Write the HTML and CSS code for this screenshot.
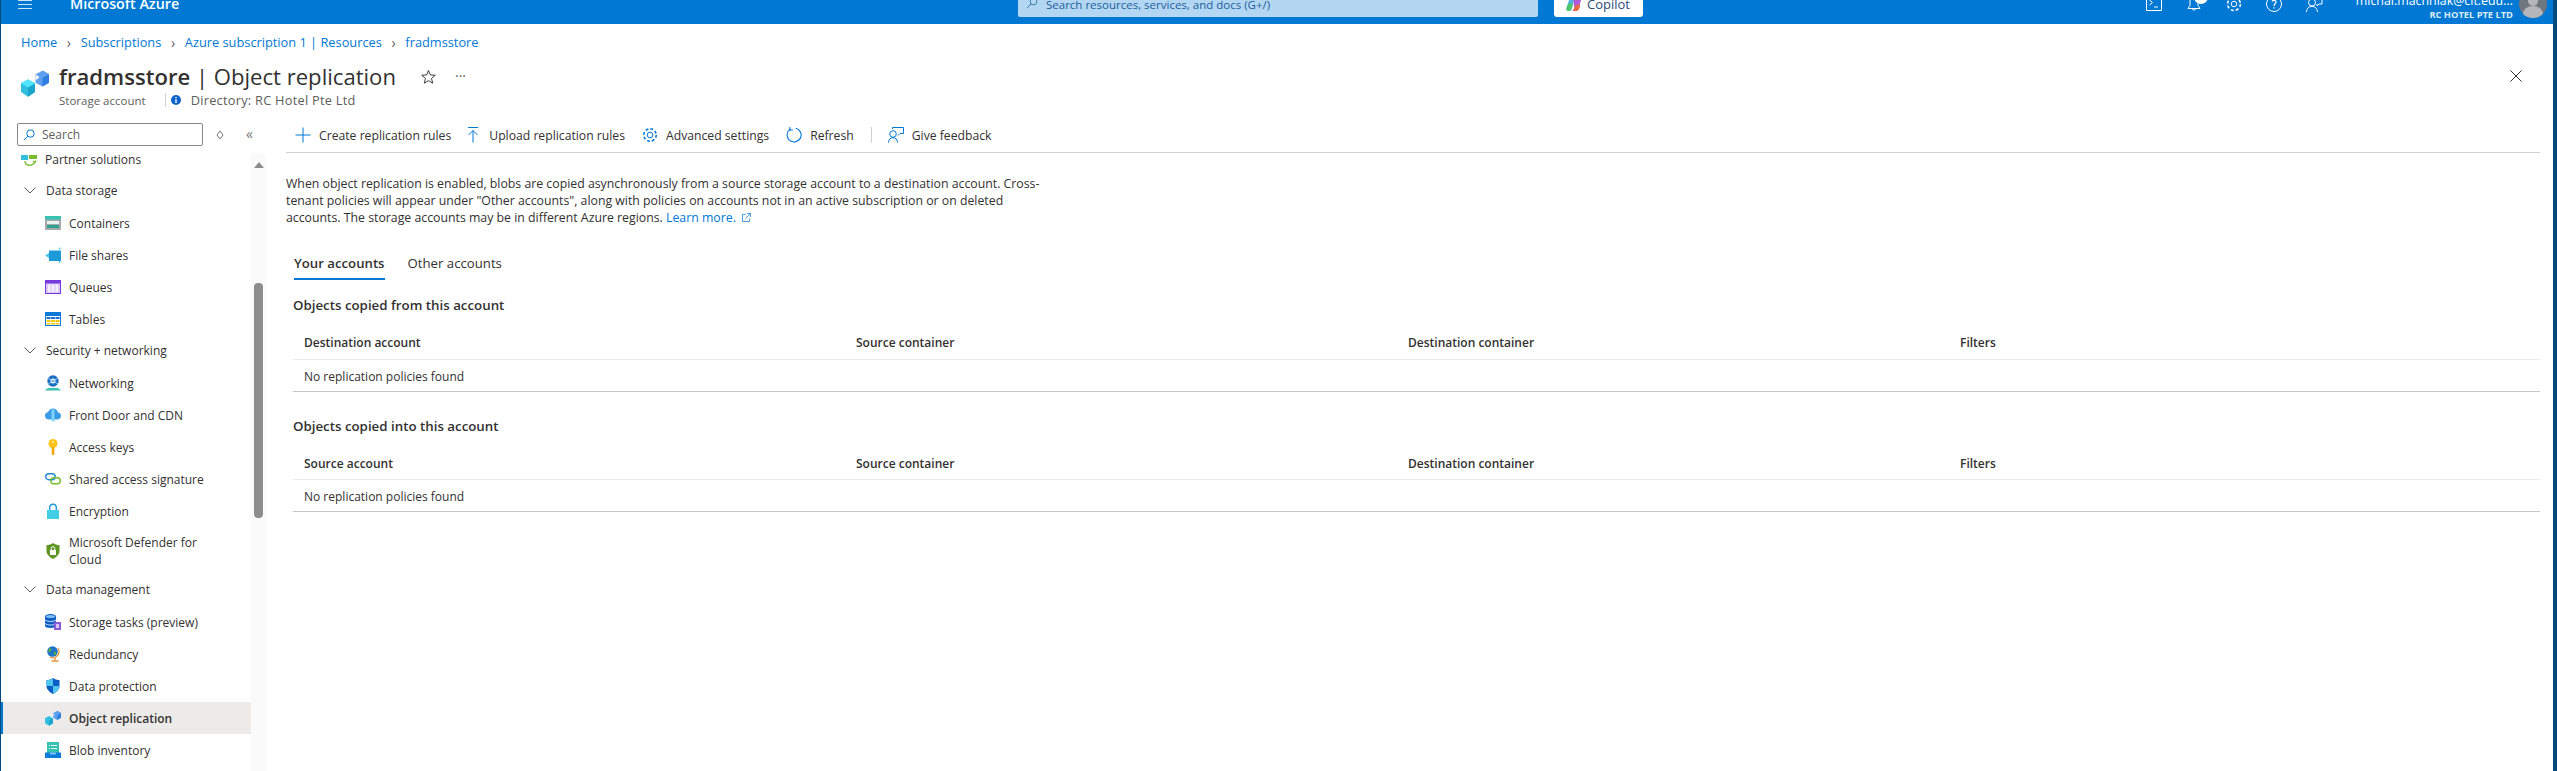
FILE: index.html
```html
<!DOCTYPE html>
<html lang="en">
<head>
    <meta charset="UTF-8">
    <meta name="viewport" content="width=device-width, initial-scale=1.0">
    <title>fradmsstore | Object replication</title>
    <link rel="stylesheet" href="styles.css">
</head>

<body>
    <div class="frame">
        <header class="topbar">
            <div class="hamburger"><span></span><span></span><span></span></div>
            <div class="brand">Microsoft Azure</div>
            <div class="global-search">
                <svg class="search-glass" viewBox="0 0 16 16"><circle cx="10" cy="6" r="4.5" fill="none" stroke="#1d5f9c" stroke-width="1"/><path d="M6.700 9.300 1.500 14.500" stroke="#1d5f9c" stroke-width="1.100"/></svg>
                <span>Search resources, services, and docs (G+/)</span>
            </div>
            <div class="copilot">
                <svg class="copilot-logo" viewBox="0 0 16 16">
                    <path d="M4 1h5L6 12c-.4 1.500-1.200 3-3 3-2 0-3-1-2.500-3z" fill="#4fb0e8"/>
                    <path d="M2 8c2-1 4-1 5 0l-1 4c-.4 1.500-1.200 3-3 3-2 0-3-1-2.500-3z" fill="#52c66a"/>
                    <path d="M7 1h5c2 0 3.500 1 3 3l-2 8c-.4 1.500-1.500 3-3.500 3H6c1.500-1 2-2 2.300-3z" fill="#b05ad6"/>
                    <path d="M7 15h3c2 0 3-1.500 3.500-3l.7-3c-2-.5-4 0-5 1.500z" fill="#f0683c"/>
                </svg>
                <span>Copilot</span>
            </div>
            <div class="top-icons">
                <svg class="top-icon" viewBox="0 0 16 16"><path d="M.5-5h15v15.500H.5z" fill="none" stroke="#fff"/><path d="M3.500 0l3 2.500-3 2.500M8 7h4" fill="none" stroke="#fff"/></svg>
                <div class="bell">
                    <svg class="top-icon" viewBox="0 0 16 16"><path d="M4-4v9.500L2 8.500h12l-2-3V-4M6 8.500c0 1 .8 1.500 2 1.500s2-.5 2-1.500" fill="none" stroke="#fff"/></svg>
                    <span class="bell-badge"></span>
                </div>
                <svg class="top-icon" viewBox="0 0 16 16"><circle cx="8" cy="4" r="2.800" fill="none" stroke="#fff"/><circle cx="8" cy="4" r="6.400" fill="none" stroke="#fff" stroke-width="1.500" stroke-dasharray="3 2"/></svg>
                <svg class="top-icon" viewBox="0 0 16 16"><circle cx="8" cy="4" r="7.500" fill="none" stroke="#fff"/><path d="M6 1.500C6.500 0 9.500 0 10 1.800 10.300 3.500 8 3.500 8 6M8 7.300v1.200" fill="none" stroke="#fff" stroke-width="1.200"/></svg>
                <svg class="top-icon" viewBox="0 0 16 16"><circle cx="6" cy="2.500" r="3.500" fill="none" stroke="#fff"/><path d="M.5 12c.3-4 2.500-5.500 5.500-5.500S11 8 11.500 12" fill="none" stroke="#fff"/><path d="M10-1h6v5h-3l-2 2V4" fill="none" stroke="#fff"/></svg>
            </div>
            <div class="account">
                <div class="account-mail">michal.machniak@cit.edu...</div>
                <div class="account-org">RC HOTEL PTE LTD</div>
            </div>
            <div class="avatar"><span class="avatar-head"></span><span class="avatar-body"></span></div>
        </header>

        <nav class="breadcrumb">
            <a>Home</a><span class="crumb-sep">&#8250;</span>
            <a>Subscriptions</a><span class="crumb-sep">&#8250;</span>
            <a>Azure subscription 1 | Resources</a><span class="crumb-sep">&#8250;</span>
            <a>fradmsstore</a>
        </nav>

        <div class="blade-head">
            <svg class="blade-icon" viewBox="0 0 16 16">
                <path d="M8.300 3 12.500 .8 16 2.800v5l-3.800 2.200-3.900-2.200z" fill="#5ea0ef"/>
                <path d="M12.300 5.200 16 2.800v5l-3.700 2.200z" fill="#2f7fe0"/>
                <path d="M0 8.200 4 6l4 2.200v5L4 15.800 0 13.200z" fill="#32bedd"/>
                <path d="M4 10.500 8 8.200v5l-4 2.600z" fill="#1ba5cc"/>
                <path d="M0 8.200 4 6l4 2.200-4 2.300z" fill="#50e6ff"/>
                <path d="M6 6.500c.8-1.200 2-1.800 3.500-1.800M8.500 3.500l1.500 1.200-1.500 1.300" fill="none" stroke="#fff" stroke-width=".7"/>
            </svg>
            <div class="blade-titles">
                <div class="title-row">
                    <h1><strong>fradmsstore</strong> | Object replication</h1>
                    <svg class="star" viewBox="0 0 16 16"><path d="M8 1.500 10 6.300l5.200.4-4 3.400 1.300 5L8 12.400l-4.500 2.700 1.300-5-4-3.400L6 6.300z" fill="none" stroke="#323130"/></svg>
                    <span class="more">&middot;&middot;&middot;</span>
                </div>
                <div class="sub-row">
                    <span>Storage account</span>
                    <span class="sub-sep"></span>
                    <svg class="info" viewBox="0 0 10 10"><circle cx="5" cy="5" r="5" fill="#0f62c9"/><path d="M4.300 4.200h1.400v3.800H4.300zM4.300 2h1.400v1.300H4.300z" fill="#fff"/></svg>
                    <span class="directory">Directory: RC Hotel Pte Ltd</span>
                </div>
            </div>
            <svg class="close" viewBox="0 0 12 12"><path d="M.5.500l11 11M11.500.500l-11 11" stroke="#323130"/></svg>
        </div>

        <div class="blade-body">
            <aside class="sidebar">
                <div class="menu-search-row">
                    <div class="menu-search">
                        <svg class="menu-glass" viewBox="0 0 12 12"><circle cx="7.500" cy="4.500" r="3.700" fill="none" stroke="#0078d4"/><path d="M4.800 7.200.8 11.200" stroke="#0078d4"/></svg>
                        <span>Search</span>
                    </div>
                    <svg class="diamond" viewBox="0 0 8 10"><path d="M4 1l3 4-3 4-3-4z" fill="none" stroke="#777"/></svg>
                    <span class="collapse">&laquo;</span>
                </div>
                <div class="menu-wrap">
                    <ul class="menu">
                        <li class="menu-item partner">
                            <svg class="ico" viewBox="0 0 16 16"><path d="M0 4h7v5H0z" fill="#32bedd"/><path d="M8 4h8v4H8z" fill="#76bc2d"/><path d="M4 10c0 5 7 6 10 1M12 10l2 1.500 1-2" fill="none" stroke="#76bc2d" stroke-width="1.300"/></svg>
                            <span>Partner solutions</span>
                        </li>
                        <li class="menu-group"><svg class="chev" viewBox="0 0 12 7"><path d="M.5.500 6 6l5.500-5.500" fill="none" stroke="#605e5c"/></svg><span>Data storage</span></li>
                        <li class="menu-item">
                            <svg class="ico" viewBox="0 0 16 16"><path d="M0 1h16v14H0z" fill="#a6a8aa"/><path d="M0 1h16v3.500H0z" fill="#37c2b1"/><path d="M2 6h12v3H2z" fill="#e8f4f2"/><path d="M2 10h12v3H2z" fill="#2d9f8e"/></svg>
                            <span>Containers</span>
                        </li>
                        <li class="menu-item">
                            <svg class="ico" viewBox="0 0 16 16"><path d="M4 3.500h12v10.500H4z" fill="#1e9bd7"/><path d="M0 8.500 4 6v5z" fill="#50c7ef"/><circle cx="14.500" cy="1.500" r="1" fill="#50c7ef"/><circle cx="14.500" cy="15" r="1" fill="#50c7ef"/></svg>
                            <span>File shares</span>
                        </li>
                        <li class="menu-item">
                            <svg class="ico" viewBox="0 0 16 16"><path d="M0 1h16v14H0z" fill="#773adc"/><path d="M1 4.500h14V14H1z" fill="#d9c8f7"/><path d="M3 5.500h2.500V13H3zM6.800 5.500h2.500V13H6.800zM10.500 5.500H13V13h-2.500z" fill="#f4effd"/></svg>
                            <span>Queues</span>
                        </li>
                        <li class="menu-item">
                            <svg class="ico" viewBox="0 0 16 16"><path d="M0 1h16v14H0z" fill="#0a7bd8"/><path d="M1 5h14v9H1z" fill="#fff"/><path d="M1.500 6h4v2h-4zM6 6h4v2H6zM10.500 6h4v2h-4z" fill="#1e6fd0"/><path d="M1.500 9h4v2h-4zM6 9h4v2H6zM10.500 9h4v2h-4zM1.500 12h4v1.500h-4zM6 12h4v1.500H6zM10.500 12h4v1.500h-4z" fill="#f2c811"/></svg>
                            <span>Tables</span>
                        </li>
                        <li class="menu-group"><svg class="chev" viewBox="0 0 12 7"><path d="M.5.500 6 6l5.500-5.500" fill="none" stroke="#605e5c"/></svg><span>Security + networking</span></li>
                        <li class="menu-item">
                            <svg class="ico" viewBox="0 0 16 16"><circle cx="8" cy="6" r="5.700" fill="#1b6ec2"/><circle cx="8" cy="6" r="2.500" fill="#fff"/><circle cx="8" cy="6" r="1.300" fill="#1b6ec2"/><path d="M3 3l10 6M3 9l10-6" stroke="#8cc4ee"/><path d="M0 15.500c1-1.500 2-2 3.500-2.500h9c1.500.5 2.500 1 3.500 2.500z" fill="#37c2b1"/></svg>
                            <span>Networking</span>
                        </li>
                        <li class="menu-item">
                            <svg class="ico" viewBox="0 0 16 16"><path d="M4 12.500C1.500 12.500 0 10.800 0 8.700 0 6.800 1.300 5.300 3.200 5 3.800 2.800 5.700 1.500 8 1.500c2.500 0 4.400 1.500 4.900 3.700 1.800.3 3.100 1.700 3.100 3.500 0 2.100-1.500 3.800-4 3.800z" fill="#3b9ce8"/><path d="M6.500 2.500h3v12.500l-3-1.500z" fill="#7fd4f5"/></svg>
                            <span>Front Door and CDN</span>
                        </li>
                        <li class="menu-item">
                            <svg class="ico" viewBox="0 0 16 16"><circle cx="8" cy="4.500" r="4.500" fill="#fcc419"/><path d="M6.700 8h2.600v8H7.500l-.8-1z" fill="#f2a60c"/><circle cx="8" cy="3" r="1" fill="#fff3c4"/></svg>
                            <span>Access keys</span>
                        </li>
                        <li class="menu-item">
                            <svg class="ico" viewBox="0 0 16 16"><rect x=".7" y="2.700" width="9.500" height="6" rx="3" fill="none" stroke="#1e8ad6" stroke-width="1.400"/><rect x="5.800" y="6.700" width="9.500" height="6" rx="3" fill="none" stroke="#76bc2d" stroke-width="1.400"/></svg>
                            <span>Shared access signature</span>
                        </li>
                        <li class="menu-item">
                            <svg class="ico" viewBox="0 0 16 16"><path d="M4.700 7V4.500a3.300 3.300 0 0 1 6.600 0V7" fill="none" stroke="#1e9bd7" stroke-width="1.400"/><path d="M2 7h12v9H2z" fill="#41cfe6"/></svg>
                            <span>Encryption</span>
                        </li>
                        <li class="menu-item two-line">
                            <svg class="ico" viewBox="0 0 16 16"><path d="M8 0c2 1.500 4 2 6.500 2v6c0 3.500-3 6-6.500 8-3.500-2-6.500-4.500-6.500-8V2C4 2 6 1.500 8 0z" fill="#5e9624"/><path d="M5 7h6v5H5z" fill="#fff"/><path d="M6.200 7V5.500a1.800 1.800 0 0 1 3.600 0V7" fill="none" stroke="#fff"/></svg>
                            <span>Microsoft Defender for Cloud</span>
                        </li>
                        <li class="menu-group"><svg class="chev" viewBox="0 0 12 7"><path d="M.5.500 6 6l5.500-5.500" fill="none" stroke="#605e5c"/></svg><span>Data management</span></li>
                        <li class="menu-item">
                            <svg class="ico" viewBox="0 0 16 16"><path d="M0 2.500C0 1 2.500 0 5.500 0S11 1 11 2.500V12c0 1.200-2.500 2-5.500 2S0 13.200 0 12z" fill="#0b5cc4"/><ellipse cx="5.500" cy="2.500" rx="4.500" ry="1.500" fill="#7fc0f2"/><path d="M0 6c2 2 9 2 11 0M0 9.500c2 2 9 2 11 0" fill="none" stroke="#fff" stroke-width=".8"/><path d="M9 8h7v8H9z" fill="#8b5ad6"/><path d="M11 10h3v4h-3z" fill="#d9c8f7"/></svg>
                            <span>Storage tasks (preview)</span>
                        </li>
                        <li class="menu-item">
                            <svg class="ico" viewBox="0 0 16 16"><path d="M13 2c2 3.500 1 8-3 9.500-2 .7-3.500.3-5-.5" fill="none" stroke="#e8963c" stroke-width="1.200"/><circle cx="7.500" cy="5.500" r="5.300" fill="#1e74c9"/><path d="M4 2.500c2-1 3 .5 2 2S3 6 3 8zM9 6c1.500-.5 3 .5 2 2.500-1.500 1-2.500 0-2-2.500z" fill="#5cb531"/><path d="M10 12v2.500M6.500 15h7" stroke="#e8963c" stroke-width="1.300"/></svg>
                            <span>Redundancy</span>
                        </li>
                        <li class="menu-item">
                            <svg class="ico" viewBox="0 0 16 16"><path d="M8 0c2 1.500 4 2 6.500 2v6c0 3.500-3 6-6.500 8-3.500-2-6.500-4.500-6.500-8V2C4 2 6 1.500 8 0z" fill="#0a5ec4"/><path d="M8 1v7H1.500V2.200C4 2 6 1.500 8 1zM8 8h6.500c0 3.500-3 6-6.500 7.500z" fill="#50c7ef"/></svg>
                            <span>Data protection</span>
                        </li>
                        <li class="menu-item active">
                            <svg class="ico" viewBox="0 0 16 16"><path d="M8.300 3 12.500 .8 16 2.800v5l-3.800 2.200-3.900-2.200z" fill="#5ea0ef"/><path d="M12.300 5.200 16 2.800v5l-3.700 2.200z" fill="#2f7fe0"/><path d="M0 8.200 4 6l4 2.200v5L4 15.800 0 13.200z" fill="#32bedd"/><path d="M4 10.500 8 8.200v5l-4 2.600z" fill="#1ba5cc"/><path d="M6 6.500c.8-1.200 2-1.800 3.500-1.800" fill="none" stroke="#fff" stroke-width=".7"/></svg>
                            <span>Object replication</span>
                        </li>
                        <li class="menu-item">
                            <svg class="ico" viewBox="0 0 16 16"><path d="M2 0h12v11H2z" fill="#37c2b1"/><path d="M4 3h1v1H4zM6 3h6v1H6zM4 6h1v1H4zM6 6h6v1H6z" fill="#e8f9f6"/><path d="M0 10.500h16V16H0z" fill="#0a7bd8"/><path d="M5 10.500h6v2H5z" fill="#7fc0f2"/></svg>
                            <span>Blob inventory</span>
                        </li>
                    </ul>
                    <div class="scrollbar">
                        <span class="scroll-up"></span>
                        <span class="scroll-thumb"></span>
                    </div>
                </div>
            </aside>

            <main class="content">
                <div class="toolbar">
                    <button class="tool first-tool">
                        <svg class="tool-icon" viewBox="0 0 16 16"><path d="M8 .5v15M.5 8h15" stroke="#0078d4"/></svg>
                        <span>Create replication rules</span>
                    </button>
                    <button class="tool">
                        <svg class="tool-icon" viewBox="0 0 16 16"><path d="M3 .500h10M8 15.500V3.500M3.500 8 8 3.500 12.500 8" fill="none" stroke="#0078d4"/></svg>
                        <span>Upload replication rules</span>
                    </button>
                    <button class="tool">
                        <svg class="tool-icon" viewBox="0 0 16 16"><circle cx="8" cy="8" r="2.800" fill="none" stroke="#0078d4"/><circle cx="8" cy="8" r="6.200" fill="none" stroke="#0078d4" stroke-width="1.600" stroke-dasharray="2.800 2"/></svg>
                        <span>Advanced settings</span>
                    </button>
                    <button class="tool">
                        <svg class="tool-icon" viewBox="0 0 16 16"><path d="M9.800 1.200A7 7 0 1 1 4.500 2" fill="none" stroke="#0078d4" stroke-width="1.100"/><path d="M3.800 0v3h3" fill="none" stroke="#0078d4"/></svg>
                        <span>Refresh</span>
                    </button>
                    <span class="tool-sep"></span>
                    <button class="tool">
                        <svg class="tool-icon" viewBox="0 0 16 16"><circle cx="5" cy="7" r="3.300" fill="none" stroke="#0078d4"/><path d="M.5 15.500c.3-3.200 2-4.800 4.500-4.800s4.300 1.600 4.500 4.800" fill="none" stroke="#0078d4"/><path d="M4.500 2V.5h11v6H12l-2 2" fill="none" stroke="#0078d4"/></svg>
                        <span>Give feedback</span>
                    </button>
                </div>

                <p class="intro">When object replication is enabled, blobs are copied asynchronously from a source storage account to a destination account. Cross-tenant policies will appear under "Other accounts", along with policies on accounts not in an active subscription or on deleted accounts. The storage accounts may be in different Azure regions. <a class="link">Learn more.</a>
                    <svg class="ext" viewBox="0 0 10 10"><path d="M4 1.500H.5v8h8V6M5.500.500h4v4M9.500.500 4 6" fill="none" stroke="#0078d4" stroke-width=".8"/></svg>
                </p>

                <div class="tabs">
                    <span class="tab selected">Your accounts</span>
                    <span class="tab">Other accounts</span>
                </div>

                <section class="policy-section">
                    <h2>Objects copied from this account</h2>
                    <div class="grid-row grid-head">
                        <span>Destination account</span><span>Source container</span><span>Destination container</span><span>Filters</span>
                    </div>
                    <div class="grid-row grid-empty"><span>No replication policies found</span></div>
                </section>

                <section class="policy-section">
                    <h2>Objects copied into this account</h2>
                    <div class="grid-row grid-head">
                        <span>Source account</span><span>Source container</span><span>Destination container</span><span>Filters</span>
                    </div>
                    <div class="grid-row grid-empty"><span>No replication policies found</span></div>
                </section>
            </main>
        </div>
    </div>
</body>
</html>
```

FILE: styles.css
```css
* {
    box-sizing: border-box;
}

html, body {
    margin: 0;
    padding: 0;
    height: 771px;
    overflow: hidden;
}

body {
    font-family: "Open Sans", "Noto Sans", Arial, sans-serif;
    font-size: 12px;
    color: #323130;
    background: white;
}

.frame {
    height: 771px;
    display: flex;
    flex-direction: column;
    border-left: 1px solid #004a7c;
    border-right: 4px solid #004a7c;
    overflow: hidden;
}

/* top bar, its upper part is cut off in the window */
.topbar {
    height: 24px;
    flex: none;
    background: #0078d4;
    display: flex;
    align-items: flex-end;
    color: white;
    overflow: hidden;
}

.hamburger {
    width: 14px;
    margin-left: 17px;
    margin-bottom: 15px;
    display: flex;
    flex-direction: column;
    gap: 3px;
    flex: none;
}

.hamburger span {
    height: 1px;
    background: #cfe4f6;
}

.brand {
    margin-left: 38px;
    width: 120px;
    font-size: 14.300px;
    font-weight: 600;
    line-height: 20px;
    margin-bottom: 10px;
    white-space: nowrap;
    flex: none;
}

.global-search {
    margin-left: 828px;
    width: 520px;
    height: 32px;
    margin-bottom: 7px;
    background: #b3d6f2;
    border-radius: 2px;
    display: flex;
    align-items: flex-end;
    padding: 0 0 4px 8px;
    color: #1d5f9c;
    font-size: 11.500px;
    flex: none;
}

.search-glass {
    width: 12px;
    height: 12px;
    margin-right: 8px;
    margin-bottom: 4px;
    flex: none;
}

.global-search span {
    line-height: 16px;
}

.copilot {
    margin-left: 16px;
    width: 89px;
    height: 32px;
    margin-bottom: 7px;
    background: white;
    border-radius: 3px;
    display: flex;
    align-items: flex-end;
    padding: 0 0 4px 12px;
    color: #2f4a7a;
    font-size: 13px;
    flex: none;
}

.copilot-logo {
    width: 16px;
    height: 16px;
    margin-right: 5px;
    margin-bottom: 1px;
    flex: none;
}

.copilot span {
    line-height: 18px;
}

.top-icons {
    margin-left: 503px;
    display: flex;
    align-items: flex-end;
    gap: 24px;
    margin-bottom: 8px;
    flex: none;
}

.top-icon {
    display: block;
    width: 16px;
    height: 16px;
    overflow: visible;
}

.bell {
    position: relative;
}

.bell-badge {
    position: absolute;
    top: -10px;
    left: 8px;
    width: 14px;
    height: 14px;
    border-radius: 50%;
    background: white;
}

.account {
    margin-left: 31px;
    width: 160px;
    text-align: right;
    flex: none;
    margin-bottom: 3px;
    white-space: nowrap;
}

.account-mail {
    font-size: 12.400px;
    line-height: 16px;
}

.account-org {
    font-size: 9.300px;
    font-weight: 700;
    line-height: 12px;
    color: #dcebf7;
}

.avatar {
    margin-left: 6px;
    width: 28px;
    height: 28px;
    margin-bottom: 6px;
    border-radius: 50%;
    background: #70767e;
    flex: none;
    position: relative;
    overflow: hidden;
}

.avatar-head {
    position: absolute;
    left: 9px;
    top: 6px;
    width: 10px;
    height: 10px;
    border-radius: 50%;
    background: #b4b6b9;
}

.avatar-body {
    position: absolute;
    left: 4px;
    top: 16px;
    width: 20px;
    height: 16px;
    border-radius: 50%;
    background: #b4b6b9;
}

/* breadcrumb and title */
.breadcrumb {
    height: 34px;
    flex: none;
    padding-left: 20px;
    padding-top: 2px;
    display: flex;
    align-items: center;
    font-size: 12.800px;
    color: #0078d4;
    white-space: nowrap;
}

.crumb-sep {
    width: 23.500px;
    text-align: center;
    color: #605e5c;
    font-size: 14px;
}

.blade-head {
    height: 53px;
    flex: none;
    display: flex;
    padding-left: 20px;
    padding-right: 31px;
    padding-top: 4px;
}

.blade-icon {
    width: 28px;
    height: 28px;
    margin-top: 7px;
    flex: none;
}

.blade-titles {
    margin-left: 10px;
    flex: 1;
}

.title-row {
    display: flex;
    align-items: center;
    height: 28px;
}

h1 {
    margin: 0;
    font-size: 22.100px;
    font-weight: 400;
    white-space: nowrap;
    width: 362px;
}

h1 strong {
    font-weight: 600;
}

.star {
    width: 15px;
    height: 15px;
    flex: none;
}

.more {
    margin-left: 19px;
    font-size: 14px;
    line-height: 10px;
    color: #605e5c;
}

.sub-row {
    display: flex;
    align-items: center;
    height: 20px;
    font-size: 11.500px;
    color: #605e5c;
}

.directory {
    font-size: 12.800px;
    letter-spacing: .25px;
}

.sub-sep {
    width: 1px;
    height: 14px;
    background: #d2d0ce;
    margin: 0 5px 0 19px;
}

.info {
    width: 10px;
    height: 10px;
    margin-right: 10px;
}

.close {
    width: 12px;
    height: 12px;
    margin-top: 8px;
    flex: none;
}

/* sidebar */
.blade-body {
    flex: 1;
    display: flex;
    min-height: 0;
}

.sidebar {
    width: 265px;
    flex: none;
    display: flex;
    flex-direction: column;
    min-height: 0;
}

.menu-search-row {
    height: 36px;
    flex: none;
    display: flex;
    align-items: flex-start;
    padding-left: 16px;
    padding-top: 12px;
}

.menu-search {
    width: 186px;
    height: 23px;
    border: 1px solid #8a8886;
    border-radius: 2px;
    display: flex;
    align-items: center;
    padding-left: 5px;
    color: #605e5c;
    font-size: 12px;
}

.menu-glass {
    width: 12px;
    height: 12px;
    margin-right: 7px;
}

.diamond {
    width: 8px;
    height: 10px;
    margin-left: 13px;
    margin-top: 7px;
}

.collapse {
    margin-left: 22px;
    font-size: 14px;
    line-height: 20px;
    color: #777;
    margin-top: 1px;
}

.menu-wrap {
    flex: 1;
    display: flex;
    min-height: 0;
    overflow: hidden;
}

.menu {
    list-style: none;
    margin: 0;
    padding: 0;
    width: 250px;
    flex: none;
}

.menu-item {
    height: 32px;
    display: flex;
    align-items: center;
    padding-left: 44px;
}

.menu-item span {
    margin-left: 8px;
    margin-top: 1px;
    line-height: 17px;
}

.ico {
    width: 16px;
    height: 16px;
    flex: none;
}

.partner {
    height: 28px;
    padding-left: 20px;
    padding-bottom: 4px;
}

.two-line {
    height: 47px;
}

.two-line span {
    width: 160px;
}

.active {
    background: #edebe9;
    border-left: 2px solid #0078d4;
    padding-left: 42px;
}

.active span {
    font-weight: 600;
}

.menu-group {
    height: 32px;
    display: flex;
    align-items: center;
    padding-left: 23px;
    padding-bottom: 2px;
}

.menu-group span {
    margin-top: 1px;
}

.chev {
    width: 12px;
    height: 7px;
    margin-right: 10px;
    flex: none;
}

.scrollbar {
    width: 15px;
    flex: none;
    background: #fafafa;
    padding-left: 3px;
    display: flex;
    flex-direction: column;
    margin-top: 7px;
}

.scroll-up {
    width: 0;
    height: 0;
    margin-top: 8px;
    border-left: 5px solid transparent;
    border-right: 5px solid transparent;
    border-bottom: 6px solid #8d8d8d;
}

.scroll-thumb {
    width: 9px;
    height: 235px;
    margin-top: 115px;
    border-radius: 4px;
    background: #8d8d8d;
}

/* main part */
.content {
    flex: 1;
    min-width: 0;
    padding: 0 13px 0 20px;
}

.toolbar {
    height: 35px;
    margin-top: 7px;
    display: flex;
    align-items: center;
    padding-left: 9px;
    border-bottom: 1px solid #d2d0ce;
}

.tool {
    display: flex;
    align-items: center;
    gap: 8px;
    margin-right: 17px;
    padding: 0;
    border: none;
    background: none;
    font: inherit;
    font-size: 12.200px;
    color: #323130;
    white-space: nowrap;
}

.first-tool {
    margin-right: 14px;
}

.tool-icon {
    width: 16px;
    height: 16px;
    flex: none;
}

.tool-sep {
    width: 1px;
    height: 16px;
    background: #d2d0ce;
    margin-right: 16px;
}

.intro {
    width: 765px;
    margin: 22px 0 0;
    font-size: 12.300px;
    line-height: 17px;
}

.link {
    color: #0078d4;
}

.ext {
    width: 9px;
    height: 9px;
    margin-left: 3px;
}

.tabs {
    margin: 26px 0 0 8px;
    height: 28px;
    display: flex;
    gap: 23px;
    font-size: 13.200px;
}

.tab {
    line-height: 23px;
    height: 28px;
}

.selected {
    font-weight: 600;
    border-bottom: 2.500px solid #0078d4;
}

.policy-section {
    margin-left: 7px;
}

h2 {
    margin: 0;
    padding-top: 15px;
    font-size: 13.300px;
    line-height: 20px;
    font-weight: 600;
}

.grid-row {
    display: grid;
    grid-template-columns: repeat(4, 1fr);
    padding: 0 28px 0 11px;
    align-items: center;
}

.grid-head {
    margin-top: 10px;
    height: 35px;
    padding-top: 1px;
    border-bottom: 1px solid #edebe9;
    font-weight: 600;
}

.grid-empty {
    height: 32px;
    padding-top: 2px;
    border-bottom: 1px solid #c8c6c4;
}

.policy-section + .policy-section h2 {
    padding-top: 24px;
}

.policy-section + .policy-section .grid-head {
    height: 34px;
}
```
